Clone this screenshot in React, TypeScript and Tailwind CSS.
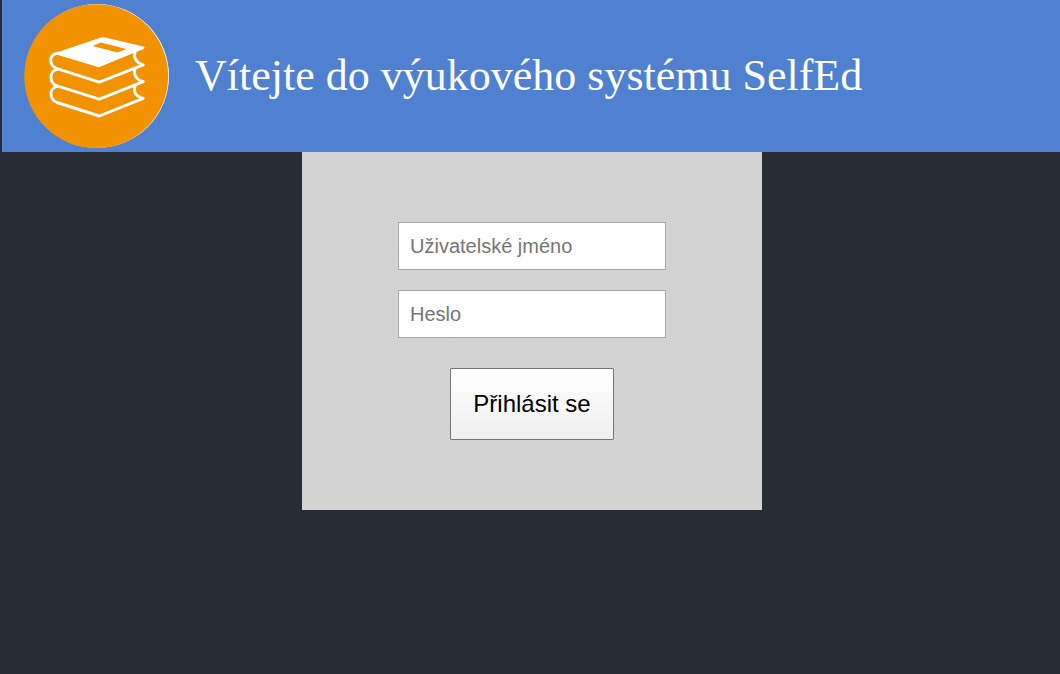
function BooksLogo() {
  return (
    <svg viewBox="24 4 145 145" className="size-[145px] shrink-0" role="img" aria-label="SelfEd">
      <circle cx="97" cy="76" r="72" fill="#ffffff" />
      <circle cx="96.2" cy="76.2" r="72" fill="#f39200" />
      <path
        fill="#ffffff"
        fillRule="evenodd"
        d="M55 53 L101 37.4 Q102.5 36.8 104 37.2 L143.5 46.6 Q145.4 47.8 143.5 49 L100 66.8 Q99 67.2 98 66.9 L58 55 Z M101 42.4 L92.5 46 L117.5 52.6 L126.5 49 Z"
      />
      <g fill="none" stroke="#ffffff" strokeWidth="2.9" strokeLinejoin="round" strokeLinecap="round">
        <path d="M58 53.2 C48.5 53.5 48.5 66 57 68.6 L99.3 82.2 L143.2 64.8 C134.5 62 133.5 57 135 51.5" />
        <path d="M57 69.6 C49 70.5 49 83 57 85.9 L99.3 99.2 L143.2 81.6 C134.5 79 133.5 74 135 68.5" />
        <path d="M57 86.6 C49 87.5 49 99.5 57 102.5 L99.3 116 L143.2 98.3 C134.5 96 133.5 91 135 85.5" />
      </g>
    </svg>
  );
}

const fieldClass =
  "h-12 w-full border border-[#a9a9a9] bg-white px-[11px] text-[20px] text-black placeholder:text-[#757575]";

export default function App() {
  return (
    <div className="min-h-screen bg-[#282c34] font-['Liberation_Sans',Arial,sans-serif]">
      <header className="ml-0.5 flex h-[152px] items-center gap-[26px] bg-[#5080d0] pl-[22px]">
        <BooksLogo />
        <h1 className="font-['Liberation_Serif','Times_New_Roman',serif] text-[44px] leading-none font-normal whitespace-nowrap text-white">
          Vítejte do výukového systému SelfEd
        </h1>
      </header>
      <main className="flex justify-center pl-1">
        <form
          className="flex w-full max-w-[460px] flex-col items-center bg-[#d3d3d3] px-24 py-[70px]"
          onSubmit={(event) => event.preventDefault()}
        >
          <div className="flex w-full flex-col gap-5">
            <input className={fieldClass} type="text" aria-label="Uživatelské jméno" placeholder="Uživatelské jméno" />
            <input className={fieldClass} type="password" aria-label="Heslo" placeholder="Heslo" />
          </div>
          <button
            type="submit"
            className="mt-[30px] h-[72px] rounded-[1px] border border-[#767676] bg-linear-to-b from-white to-[#efefef] px-[22px] text-[24px] text-black"
          >
            Přihlásit se
          </button>
        </form>
      </main>
    </div>
  );
}
